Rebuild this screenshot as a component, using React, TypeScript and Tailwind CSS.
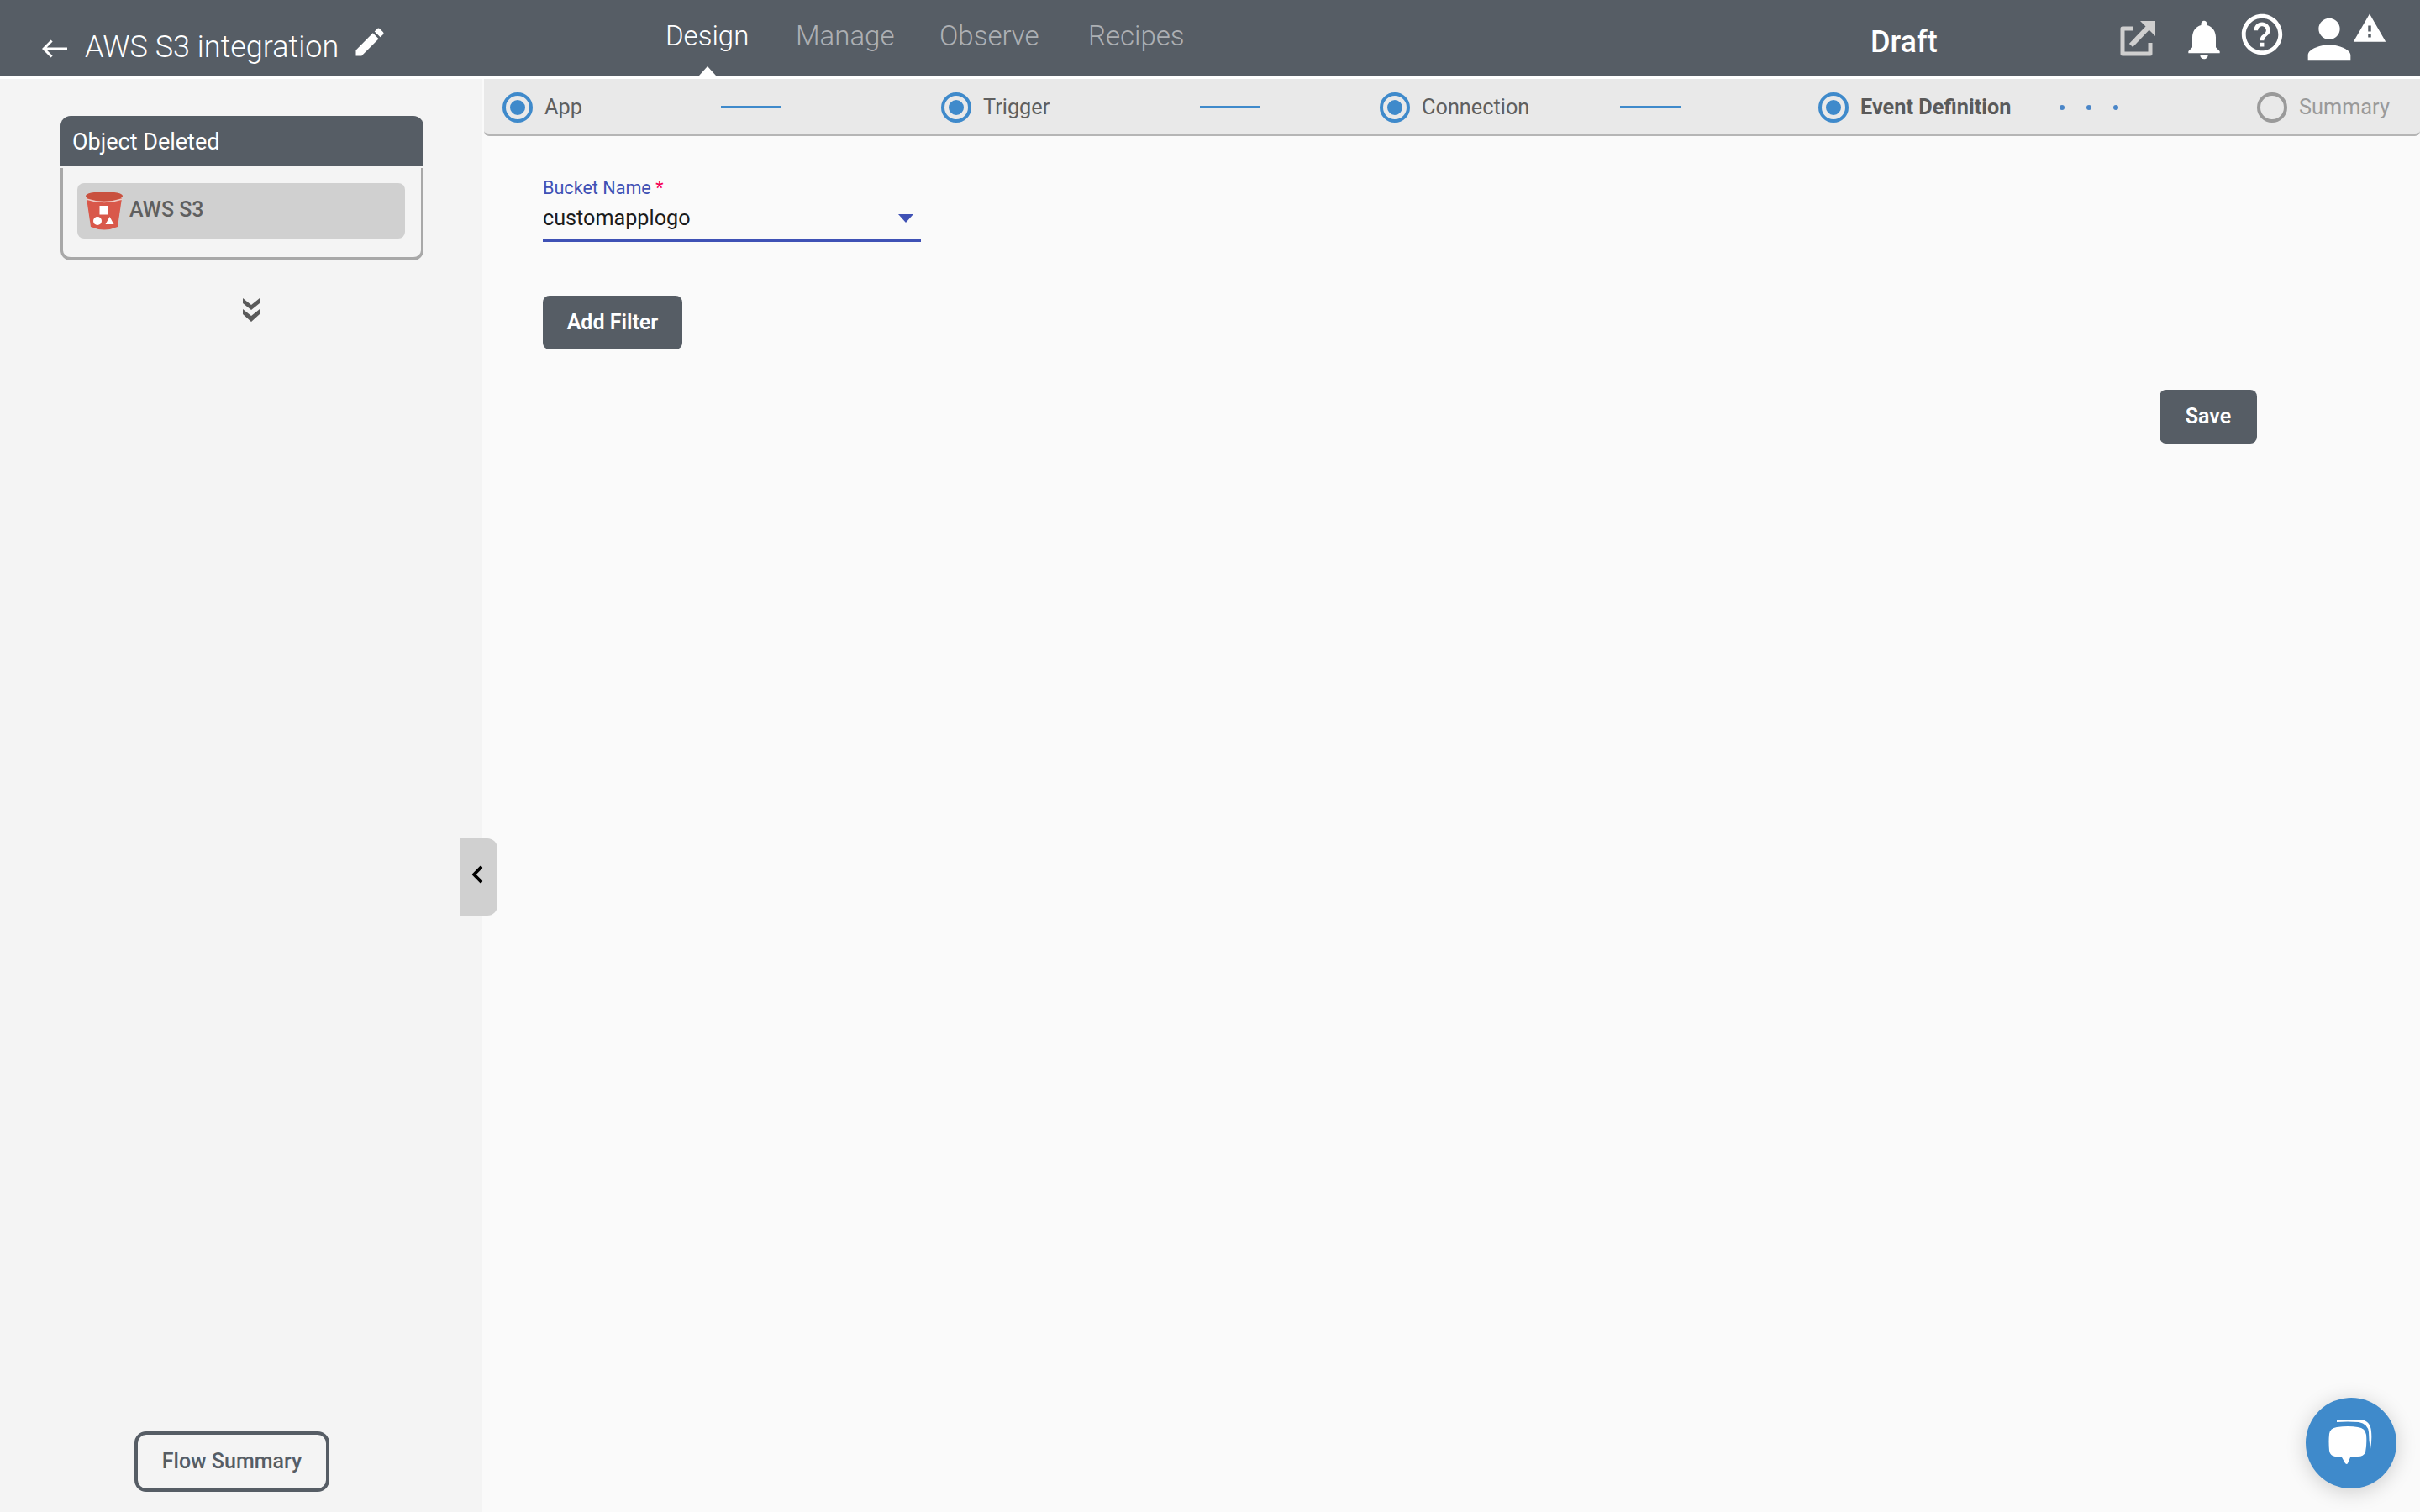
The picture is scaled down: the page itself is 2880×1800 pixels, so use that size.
import { FaChevronLeft } from "react-icons/fa";
import { MdEdit, MdHelpOutline, MdNotifications, MdPerson, MdWarning, MdWest } from "react-icons/md";

const steps = [
  { name: "App", labelWidth: "w-[224px]", next: "line" },
  { name: "Trigger", labelWidth: "w-[272px]", next: "line" },
  { name: "Connection", labelWidth: "w-[250px]", next: "line" },
  { name: "Event Definition", labelWidth: "w-[251px]", next: "dots", active: true },
  { name: "Summary", labelWidth: "", next: "", pending: true },
];

function BucketIcon() {
  return (
    <svg viewBox="0 0 44 46" className="w-[44px] h-[46px] shrink-0">
      <path d="M1 8 L6 42 Q22 49 38 42 L43 8 Z" fill="#d9584a" />
      <ellipse cx="22" cy="5.5" rx="22" ry="5.5" fill="#c9513f" />
      <path d="M0.5 9 Q22 16 43.5 9" fill="none" stroke="#eeccc6" strokeWidth="1.5" />
      <rect x="16.5" y="17" width="10.5" height="10.5" fill="#fff" />
      <circle cx="14" cy="35" r="5" fill="#fff" />
      <path d="M28.5 30 L33.5 39 L23.5 39 Z" fill="#fff" />
    </svg>
  );
}

function ChatIcon() {
  return (
    <svg viewBox="0 0 54 56" className="w-[54px] h-[56px]">
      <path
        d="M10 1 Q24 -1 38 0 Q50 1 51 14 Q52 24 50 35 Q48 24 48 15 Q47 5 36 3 Q22 2 10 3 Z"
        fill="#fff"
      />
      <path
        d="M10 9 Q24 7 35 9 Q44 10 45 18 Q46 29 44 39 Q42 44 35 44 L26 45 L23 52 Q22 54 20 52 L16 45 L8 44 Q2 43 1 37 Q0 26 1 17 Q2 10 10 9 Z"
        fill="#fff"
      />
    </svg>
  );
}

function OpenIcon() {
  return (
    <svg viewBox="0 0 42 42" className="w-[42px] h-[42px] mt-[25px] text-[#cfcfcf]">
      <path d="M16 9 H3 V39 H36 V26" fill="none" stroke="currentColor" strokeWidth="5" strokeLinejoin="round" />
      <path d="M13 29 L35 6" fill="none" stroke="currentColor" strokeWidth="6" />
      <path d="M24 0 H42 V18 Z" fill="currentColor" />
    </svg>
  );
}

function DoubleDown() {
  return (
    <svg viewBox="0 0 24 30" className="w-[24px] h-[30px] text-[#5a5a5a]">
      <path d="M2 2 L12 10 L22 2 V8 L12 16 L2 8 Z" fill="currentColor" />
      <path d="M2 15 L12 23 L22 15 V21 L12 30 L2 21 Z" fill="currentColor" />
    </svg>
  );
}

function StepCircle({ pending }: { pending?: boolean }) {
  if (pending) {
    return <span className="w-[36px] h-[36px] rounded-full border-[4px] border-[#9a9a9a] shrink-0" />;
  }
  return (
    <span className="w-[36px] h-[36px] rounded-full border-[4px] border-[#3f8acb] shrink-0 flex items-center justify-center">
      <span className="w-[18px] h-[18px] rounded-full bg-[#3f8acb]" />
    </span>
  );
}

export default function App() {
  return (
    <div className="w-[2880px] h-[1800px] flex flex-col bg-white overflow-hidden relative font-['Roboto',sans-serif]">
      <header className="h-[90px] bg-[#565d65] flex shrink-0 text-white">
        <div className="w-[792px] flex items-start pl-[47px] pt-[33px]">
          <MdWest size={36} className="mt-[7px]" />
          <span className="ml-[18px] text-[36px] leading-[46px] font-light">AWS S3 integration</span>
          <MdEdit size={44} className="ml-[15px] -mt-[5px]" />
        </div>
        <nav className="w-[1434px] flex items-start pt-[21px] text-[33px] leading-[44px] font-light">
          <span className="relative w-[155px]">
            Design
            <span className="absolute left-[40px] top-[58px] border-x-[10px] border-b-[11px] border-x-transparent border-b-white" />
          </span>
          <span className="w-[171px] text-[#adb0b4]">Manage</span>
          <span className="w-[177px] text-[#adb0b4]">Observe</span>
          <span className="text-[#adb0b4]">Recipes</span>
        </nav>
        <span className="w-[299px] pt-[29px] text-[36px] leading-[42px] font-medium">Draft</span>
        <div className="flex items-start -ml-[2px]">
          <OpenIcon />
          <MdNotifications size={56} className="ml-[30px] mt-[19px]" />
          <MdHelpOutline size={58} className="ml-[12px] mt-[12px]" />
          <MdPerson size={76} className="ml-[13px] mt-[9px]" />
          <MdWarning size={42} className="-ml-[11px] mt-[13px]" />
        </div>
      </header>

      <div className="flex flex-1 mt-[4px] min-h-0">
        <aside className="w-[574px] bg-[#f4f4f4] flex flex-col relative shrink-0">
          <div className="ml-[72px] mt-[44px] w-[432px]">
            <div className="h-[60px] bg-[#565d65] rounded-t-[12px] text-white text-[27px] leading-[62px] pl-[14px]">
              Object Deleted
            </div>
            <div className="mt-[2px] h-[110px] border-x-[3px] border-b-[4px] border-[#a8a8a8] rounded-b-[12px] pl-[17px] pr-[19px] pt-[18px]">
              <div className="h-[66px] bg-[#d0d0d0] rounded-[8px] flex items-center pl-[10px] gap-[8px]">
                <BucketIcon />
                <span className="text-[25px] font-medium text-[#5f5f5f] -mt-[2px]">AWS S3</span>
              </div>
            </div>
          </div>
          <div className="ml-[287px] mt-[43px]">
            <DoubleDown />
          </div>
          <button className="mt-auto mb-[24px] ml-[160px] w-[232px] h-[72px] border-[4px] border-[#565d65] rounded-[14px] text-[25px] font-medium text-[#565d65]">
            Flow Summary
          </button>
          <div className="absolute left-[548px] top-[904px] w-[44px] h-[92px] bg-[#d0d0d0] rounded-r-[12px] flex items-center justify-center z-10">
            <FaChevronLeft size={24} className="text-black -mt-[6px] -ml-[4px]" />
          </div>
        </aside>

        <main className="flex-1 min-w-0 bg-[#fafafa] flex flex-col">
          <div className="h-[68px] ml-[2px] pt-[2px] bg-[#e9e9e9] border-b-[3px] border-[#b5b5b5] rounded-b-[6px] flex items-center pl-[22px] shrink-0">
            {steps.map((s) => (
              <div key={s.name} className="w-[522px] last:w-auto flex items-center shrink-0">
                <StepCircle pending={s.pending} />
                <span
                  className={`pl-[14px] text-[25.3px] ${s.labelWidth} ${s.active ? "font-bold text-[#5a5a5a]" : s.pending ? "text-[#9a9a9a]" : "text-[#5f5f5f]"}`}
                >
                  {s.name}
                </span>
                {s.next === "line" && <span className="w-[72px] h-[3px] bg-[#3f8acb]" />}
                {s.next === "dots" && (
                  <span className="flex gap-[26px]">
                    <span className="w-[6px] h-[6px] rounded-full bg-[#4a86c8]" />
                    <span className="w-[6px] h-[6px] rounded-full bg-[#4a86c8]" />
                    <span className="w-[6px] h-[6px] rounded-full bg-[#4a86c8]" />
                  </span>
                )}
              </div>
            ))}
          </div>

          <div className="pl-[72px] pr-[194px] pt-[49px]">
            <div className="w-[450px]">
              <label className="block text-[21.6px] leading-[26px] text-[#3f51b5]">
                Bucket Name <span className="text-[#f50057]">*</span>
              </label>
              <div className="h-[51px] pb-[2px] border-b-[4px] border-[#3f51b5] flex items-center justify-between pr-[9px] text-[25.2px] text-[#1c1c1c]">
                <span>customapplogo</span>
                <span className="border-x-[9px] border-t-[10px] border-x-transparent border-t-[#3f51b5]" />
              </div>
            </div>
            <button className="mt-[64px] w-[166px] h-[64px] block bg-[#565d65] rounded-[8px] text-white text-[25px] font-semibold">
              Add Filter
            </button>
            <div className="flex justify-end mt-[48px]">
              <button className="w-[116px] h-[64px] bg-[#565d65] rounded-[8px] text-white text-[25px] font-semibold">
                Save
              </button>
            </div>
          </div>
        </main>
      </div>

      <button className="absolute left-[2744px] top-[1664px] w-[108px] h-[108px] rounded-full bg-[#3f8acb] shadow-[0_4px_24px_rgba(0,0,0,0.18)] flex items-center justify-center">
        <ChatIcon />
      </button>
    </div>
  );
}
